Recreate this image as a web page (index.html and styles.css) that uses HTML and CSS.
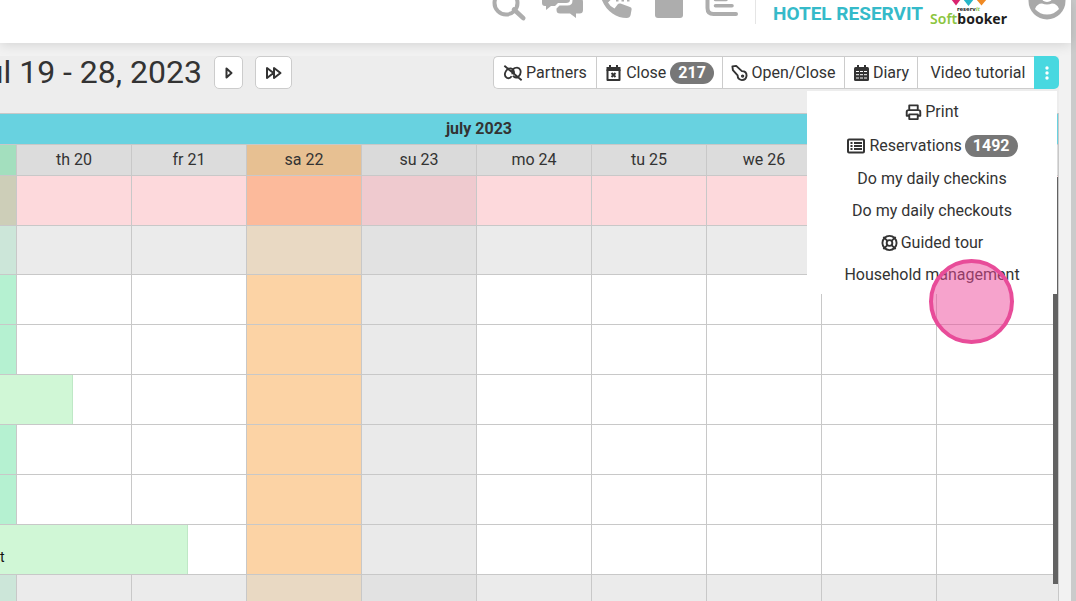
FILE: index.html
```html
<!DOCTYPE html>
<html lang="en">
<head>
<meta charset="utf-8">
<title>Hotel Reservit - Planning</title>
<link rel="stylesheet" href="styles.css">
</head>
<body>
<div class="page">
  <header class="topbar">
    <nav class="topnav" aria-label="Main">
      <button class="nav-btn" aria-label="Search"><svg viewBox="483 0 53 24"><circle cx="506" cy="3" r="11.5" fill="none" stroke="currentColor" stroke-width="4"/><path d="M514 9.500l9.300 8.700" stroke="currentColor" stroke-width="4.500" stroke-linecap="round"/></svg></button>
      <button class="nav-btn" aria-label="Messages"><svg viewBox="536 0 53 24"><path fill="currentColor" d="M542 -8h28v8q0 3-4 3h-8l-3 3h-4l-5 4v-4h-1q-3 0-3-3z"/><path fill="currentColor" d="M572.500 -2h7q3.500 0 3.500 4v8q0 3.500-3.500 3.500h-3.500v4.500l-6-4.500h-10q-3.500 0-3.500-3.500v-1.500l3-3h8q5 0 5-5z"/></svg></button>
      <button class="nav-btn" aria-label="Calls"><svg viewBox="589 0 53 24"><path fill="currentColor" d="M600 -8h9l2.500 7-3.500 3.500q2 4 6.500 6l3.500-4.500q1-1 2.500-.4l9.500 3.400q2 .8 1.600 2.500l-1 5.500q-.6 3-4 3c-11 0-23-8-26.600-24z"/><path fill="currentColor" d="M616-1h2.500v2.500h-2.500zM621.500-1h2.500v2.500h-2.500zM627-1h2.500v2.500h-2.500z"/></svg></button>
      <button class="nav-btn" aria-label="Notes"><svg viewBox="642 0 53 24"><path fill="currentColor" d="M655-6h28v21q0 3-3 3h-22q-3 0-3-3z"/></svg></button>
      <button class="nav-btn" aria-label="Reports"><svg viewBox="695 0 53 24"><path d="M707.500-6V8q0 6 6 6H736" fill="none" stroke="currentColor" stroke-width="4" stroke-linecap="round"/><path d="M715.500-.500H726M715.500 5.800H732" stroke="currentColor" stroke-width="3.600" stroke-linecap="round"/></svg></button>
    </nav>
    <strong class="hotel">HOTEL RESERVIT</strong>
    <div class="logo">
      <svg class="logo-mark" viewBox="0 0 75 6" aria-hidden="true"><path fill="#d9246f" d="M20-1h10L25 5.500z"/><path fill="#27b5c8" d="M32-1h11l-5.500 7z"/><path fill="#f08a24" d="M45-1h11l-5.500 6.500z"/></svg>
      <span class="logo-small">reserv<i>it</i></span>
      <span class="logo-name"><span class="logo-soft">Soft</span>booker</span>
    </div>
    <button class="avatar" aria-label="Account"><svg viewBox="0 0 38 24"><circle cx="19" cy="1" r="18.500" fill="#a9a9a9"/><circle cx="19" cy="-4" r="6" fill="#fff"/><path fill="#fff" d="M7 9Q9 3.500 14 3.500q5 2 10 0Q29 3.500 31 9 26 14.500 19 14.500T7 9z"/></svg></button>
  </header>

  <main class="planning">
    <div class="toolbar">
      <h1 class="range"><span>Jul 19 - 28, 2023</span></h1>
      <button class="btn next" aria-label="Next"><svg class="ic-small" viewBox="0 0 8 14"><path d="M1.500 2.500v9L6.500 7z"/></svg></button>
      <button class="btn skip" aria-label="Skip forward"><svg class="ic-skip" viewBox="0 0 18 14"><path d="M2 2v10l6.500-5zM9 2v10l6.500-5z"/></svg></button>
      <div class="group">
        <button class="g-btn partners"><svg class="ic wide" viewBox="0 0 22 18"><path d="M9.500 12.500Q7.500 15.500 4.500 14.500 1 12.500 2.500 8.500 4.500 3.500 8.500 4q4.500 1.500 3.500 7M10.500 10.500Q9 5 13 3.500q4.500-1.500 6 2 1.500 4-2 7.500-3.500 2.500-6-1M1.500 1l19 16"/></svg>Partners</button>
        <button class="g-btn close"><svg class="ic" viewBox="0 0 16 18"><path d="M2 6h12v10H2z"/><path class="solid" d="M1 3h14v4H1z"/><path d="M4.500 1v4M11.500 1v4M6 9l4 4M10 9l-4 4"/></svg>Close <span class="badge">217</span></button>
        <button class="g-btn open"><svg class="ic" viewBox="0 0 18 18"><path d="M1.500 2l4-.5 6 5.500q5 0 5 4.800-.5 4.700-5 4.700-4.500-.5-4.500-5L2 6z"/><circle cx="12.300" cy="12.300" r=".8"/></svg>Open/Close</button>
        <button class="g-btn diary"><svg class="ic" viewBox="0 0 16 18"><rect class="solid" x=".5" y="3" width="15" height="14" rx="1.500"/><path d="M4.500 1v3M11.500 1v3"/><path class="holes" d="M2.500 7.500h3M6.500 7.500h3M10.500 7.500h3M2.500 10.700h3M6.500 10.700h3M10.500 10.700h3M2.500 14h3M6.500 14h3M10.500 14h3"/></svg>Diary</button>
        <button class="g-btn video">Video tutorial</button>
        <button class="g-btn more" aria-label="More"><svg viewBox="0 0 6 16"><circle cx="3" cy="3" r="1.700"/><circle cx="3" cy="8" r="1.700"/><circle cx="3" cy="13" r="1.700"/></svg></button>
        <div class="menu">
          <button class="item"><svg class="ic" viewBox="0 0 18 18"><path d="M4.500 7V2h9v5M4 13H1.800V9q0-2 2-2h10.400q2 0 2 2v4H14M4.500 11.500h9v5h-9z"/></svg>Print</button>
          <button class="item tall"><svg class="ic wide" viewBox="0 0 20 18"><rect x="2" y="2.500" width="16" height="13" rx="1"/><path class="mid" d="M4.500 6h2M8 6h8M4.500 9h2M8 9h8M4.500 12h2M8 12h8"/></svg>Reservations <span class="badge">1492</span></button>
          <button class="item">Do my daily checkins</button>
          <button class="item">Do my daily checkouts</button>
          <button class="item"><svg class="ic" viewBox="0 0 18 18"><circle cx="9" cy="9" r="7.500"/><circle cx="9" cy="9" r="3"/><path d="M2.500 2.500l4.300 4.300M15.500 2.500l-4.300 4.300M2.500 15.500l4.300-4.300M15.500 15.500l-4.300-4.300"/></svg>Guided tour</button>
          <button class="item">Household management</button>
          <span class="pointer"></span>
        </div>
      </div>
    </div>

    <div class="board">
      <table class="calendar">
        <colgroup><col class="c-today"><col class="c-day" span="8"><col></colgroup>
        <thead>
          <tr class="month"><th colspan="10"><span class="month-name">july 2023</span></th></tr>
          <tr class="days"><th></th><th>th 20</th><th>fr 21</th><th>sa 22</th><th>su 23</th><th>mo 24</th><th>tu 25</th><th>we 26</th><th></th><th></th></tr>
        </thead>
        <tbody>
          <tr class="closed"><td></td><td></td><td></td><td></td><td></td><td></td><td></td><td></td><td></td><td></td></tr>
          <tr class="category"><td></td><td></td><td></td><td></td><td></td><td></td><td></td><td></td><td></td><td></td></tr>
          <tr><td></td><td></td><td></td><td></td><td></td><td></td><td></td><td></td><td></td><td></td></tr>
          <tr><td></td><td></td><td></td><td></td><td></td><td></td><td></td><td></td><td></td><td></td></tr>
          <tr><td><div class="stay stay-short"></div></td><td></td><td></td><td></td><td></td><td></td><td></td><td></td><td></td><td></td></tr>
          <tr><td></td><td></td><td></td><td></td><td></td><td></td><td></td><td></td><td></td><td></td></tr>
          <tr><td></td><td></td><td></td><td></td><td></td><td></td><td></td><td></td><td></td><td></td></tr>
          <tr><td><div class="stay stay-long">t</div></td><td></td><td></td><td></td><td></td><td></td><td></td><td></td><td></td><td></td></tr>
          <tr class="category"><td></td><td></td><td></td><td></td><td></td><td></td><td></td><td></td><td></td><td></td></tr>
        </tbody>
      </table>
      <span class="scroll-thumb"></span>
    </div>
  </main>
</div>
<div class="page-scroll"></div>
</body>
</html>
```
FILE: styles.css
```css
* { box-sizing: border-box; }
body {
  margin: 0;
  height: 100vh;
  display: flex;
  overflow: hidden;
  background: #f2f2f2;
  color: #333;
  font: 16px/20px Roboto, sans-serif;
}
button {
  margin: 0;
  padding: 0;
  border: 0;
  background: none;
  color: inherit;
  font: inherit;
}
svg { display: block; flex: none; }

.page { flex: 1; min-width: 0; display: flex; flex-direction: column; }
.page-scroll { flex: 0 0 5px; background: #cbcbcb; }

.topbar {
  flex: none;
  height: 43px;
  display: flex;
  justify-content: flex-end;
  align-items: flex-start;
  padding-right: 5px;
  background: #fff;
  box-shadow: 0 1px 12px rgba(0, 0, 0, .14);
  position: relative;
}
.topnav { display: flex; padding-right: 7px; border-right: 1px solid #e5e5e5; }
.nav-btn { color: #adadad; }
.nav-btn svg { width: 53px; height: 24px; }
.hotel {
  width: 158px;
  margin-left: 17px;
  padding-top: 4px;
  color: #35bac9;
  font-size: 19px;
  font-weight: 700;
  white-space: nowrap;
}
.logo { width: 75px; display: flex; flex-direction: column; align-items: center; }
.logo-mark { width: 75px; height: 6px; }
.logo-small { font: 700 6px/6px "Noto Sans", sans-serif; color: #222; }
.logo-small i, .logo-soft { color: #8cc540; }
.logo-name { font: 700 14px/14px "Noto Sans", sans-serif; color: #1d1d1d; }
.logo-soft { font-weight: 600; }
.avatar { margin-left: 22px; }
.avatar svg { width: 38px; height: 24px; }

.planning { flex: 1; min-height: 0; margin-right: 12px; padding-top: 13px; }
.toolbar { height: 57px; display: flex; align-items: flex-start; background: #ededed; }
.range {
  width: 202px;
  margin: 0 12px 0 0;
  display: flex;
  justify-content: flex-end;
  font-size: 32px;
  line-height: 33px;
  font-weight: 400;
  white-space: nowrap;
}
.btn {
  height: 33px;
  display: flex;
  align-items: center;
  justify-content: center;
  background: #fff;
  border: 1px solid #ccc;
  border-radius: 5px;
}
.next { width: 29px; margin-right: 12px; }
.skip { width: 37px; }
.ic-small { width: 8px; height: 14px; }
.ic-skip { width: 18px; height: 14px; }
.btn path { fill: none; stroke: #333; stroke-width: 2; stroke-linejoin: round; }

.group { position: relative; display: flex; margin-left: auto; height: 33px; }
.g-btn {
  display: flex;
  align-items: center;
  justify-content: center;
  gap: 3px;
  background: #fff;
  border: 1px solid #ccc;
  border-right: 0;
  white-space: nowrap;
}
.partners { width: 103px; border-radius: 5px 0 0 5px; }
.close { width: 126px; gap: 4px; }
.open { width: 122px; }
.diary { width: 73px; }
.video { width: 117px; padding-left: 4px; }
.more { width: 25px; background: #48d8e0; border: 0; border-radius: 0 5px 5px 0; }
.more svg { width: 6px; height: 16px; fill: #fff; }
.ic { width: 17px; height: 18px; fill: none; stroke: #333; stroke-width: 2; stroke-linejoin: round; }
.ic.wide { width: 20px; }
.ic .solid { fill: #333; stroke: none; }
.ic .holes { stroke: #fff; stroke-width: 1; }
.ic .mid { stroke-width: 2; }
.badge {
  padding: 0 8px;
  border-radius: 12px;
  background: #777;
  color: #fff;
  font-size: 16px;
  line-height: 22px;
  font-weight: 700;
}

.menu {
  position: absolute;
  z-index: 2;
  top: 35px;
  right: 2px;
  width: 250px;
  padding: 5px 0 3px;
  display: flex;
  flex-direction: column;
  background: #fff;
}
.item {
  height: 32px;
  display: flex;
  align-items: center;
  justify-content: center;
  gap: 3px;
  white-space: nowrap;
}
.tall { height: 35px; }
.pointer {
  position: absolute;
  right: 43px;
  bottom: -50px;
  width: 85px;
  height: 85px;
  border: 4px solid #e84c99;
  border-radius: 50%;
  background: rgba(237, 72, 154, .5);
}

.board { position: relative; }
.calendar {
  width: 100%;
  table-layout: fixed;
  border-collapse: separate;
  border-spacing: 0;
  background: #fff;
}
.c-today { width: 17px; }
.c-day { width: 115px; }
.calendar th, .calendar td {
  padding: 0;
  border: solid #c8c8c8;
  border-width: 0 1px 1px 0;
  background-clip: padding-box;
}
.calendar .month th {
  height: 32px;
  border-top-width: 1px;
  background: #68d2e0;
  font-weight: 700;
}
.month-name { padding-right: 100px; }
.days th { height: 31px; background: #dcdcdc; font-weight: 400; }
.calendar td { height: 50px; position: relative; }
.calendar .category td { height: 49px; }
td:nth-child(1) { background: #b5f1d1; }
td:nth-child(4) { background: #fcd3a5; }
td:nth-child(5) { background: #eaeaea; }
.days th:nth-child(1) { background: #a3dfbe; }
.days th:nth-child(4) { background: #e7c092; }
.days th:nth-child(5) { background: #dadada; }
.closed td { background: #fdd9dc; }
.closed td:nth-child(1) { background: #cdceb8; }
.closed td:nth-child(4) { background: #fcba9b; }
.closed td:nth-child(5) { background: #efcacf; }
.category td { background: #ebebeb; }
.category td:nth-child(1) { background: #cce6d9; }
.category td:nth-child(4) { background: #e9d9c3; }
.category td:nth-child(5) { background: #e2e2e2; }
.stay {
  position: absolute;
  z-index: 1;
  left: 0;
  top: 0;
  height: 49px;
  padding-top: 22px;
  background: #d0f7d6;
  border-right: 1px solid #bfe8c6;
  color: #111;
  font-size: 14px;
}
.stay-short { width: 73px; }
.stay-long { width: 188px; }
.scroll-thumb {
  position: absolute;
  top: 64px;
  right: 1px;
  width: 5px;
  height: 407px;
  background: #626262;
}
```
